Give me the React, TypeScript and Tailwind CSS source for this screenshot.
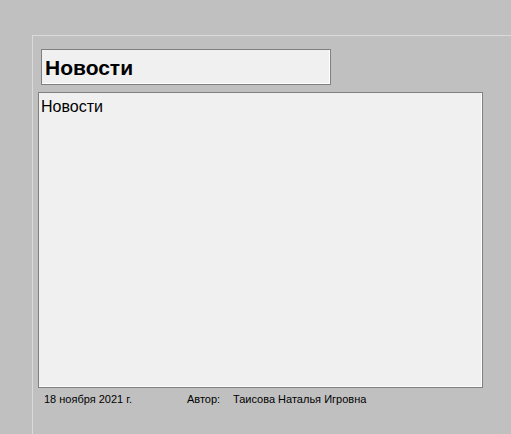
import React from "react";

export default function App() {
  return (
    <div
      className="w-[511px] h-[434px] bg-[#c0c0c0] overflow-hidden text-black"
      style={{ fontFamily: '"Liberation Sans", Arial, sans-serif' }}
    >
      <div className="ml-[32px] mt-[35px] h-[399px] border-l border-t border-[#dadada] flex flex-col">
        <div className="ml-[8px] mt-[13px] w-[290px] h-[36px] border border-[#808080] bg-[#f0f0f0] shadow-[inset_-1px_-1px_0_#ffffff] flex items-center px-[3px]">
          <span className="text-[21px] font-bold leading-none">Новости</span>
        </div>
        <div className="ml-[5px] mt-[7px] w-[445px] h-[296px] border border-[#808080] bg-[#f0f0f0] shadow-[inset_-1px_-1px_0_#ffffff] px-[2px] pt-[2px]">
          <span className="text-[16px] leading-[18px]">Новости</span>
        </div>
        <div className="flex text-[11px] leading-[14px] mt-[4px]">
          <span className="ml-[11px] w-[143px]">18 ноября 2021 г.</span>
          <span className="w-[46px]">Автор:</span>
          <span>Таисова Наталья Игровна</span>
        </div>
      </div>
    </div>
  );
}
